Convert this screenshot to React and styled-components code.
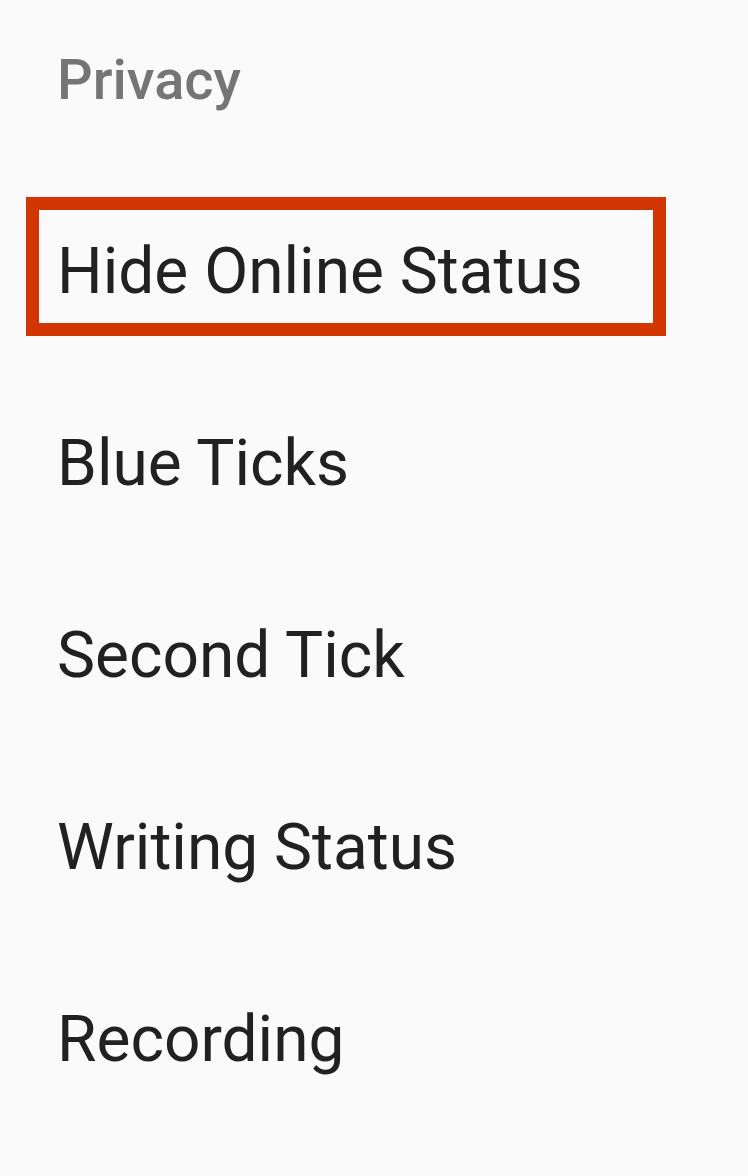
import React from 'react';
import styled, { createGlobalStyle } from 'styled-components';

const GlobalStyle = createGlobalStyle`
  html, body {
    margin: 0;
    padding: 0;
    background: #fafafa;
  }
  body {
    font-family: Roboto, "Noto Sans", sans-serif;
    -webkit-font-smoothing: antialiased;
  }
`;

const items = [
    { id: 'online', label: 'Hide Online Status', marked: true },
    { id: 'blue', label: 'Blue Ticks' },
    { id: 'second', label: 'Second Tick' },
    { id: 'writing', label: 'Writing Status' },
    { id: 'recording', label: 'Recording' },
];

const App = () => {
    return (
        <Screen>
            <GlobalStyle />
            <SectionTitle>Privacy</SectionTitle>
            <List>
                {items.map(({ id, label, marked }) => (
                    <Row key={id}>
                        {marked && <Highlight />}
                        <Label>{label}</Label>
                    </Row>
                ))}
            </List>
        </Screen>
    );
};

const Screen = styled.div`
  width: 748px;
  min-height: 1176px;
  background: #fafafa;
  padding: 40px 0 0 57px;
  box-sizing: border-box;
`;

const SectionTitle = styled.h2`
  margin: 0;
  font-size: 56px;
  line-height: 80px;
  font-weight: 500;
  color: #757575;
`;

const List = styled.div`
  display: flex;
  flex-direction: column;
  margin-top: 56px;
`;

const Row = styled.div`
  position: relative;
  height: 192px;
  display: flex;
  align-items: center;
`;

const Label = styled.span`
  font-size: 64px;
  line-height: 192px;
  font-weight: 400;
  color: #212121;
`;

const Highlight = styled.div`
  position: absolute;
  left: -31px;
  top: 21px;
  width: 640px;
  height: 139px;
  border: 13px solid #d33500;
  box-sizing: border-box;
  pointer-events: none;
`;

export default App;
